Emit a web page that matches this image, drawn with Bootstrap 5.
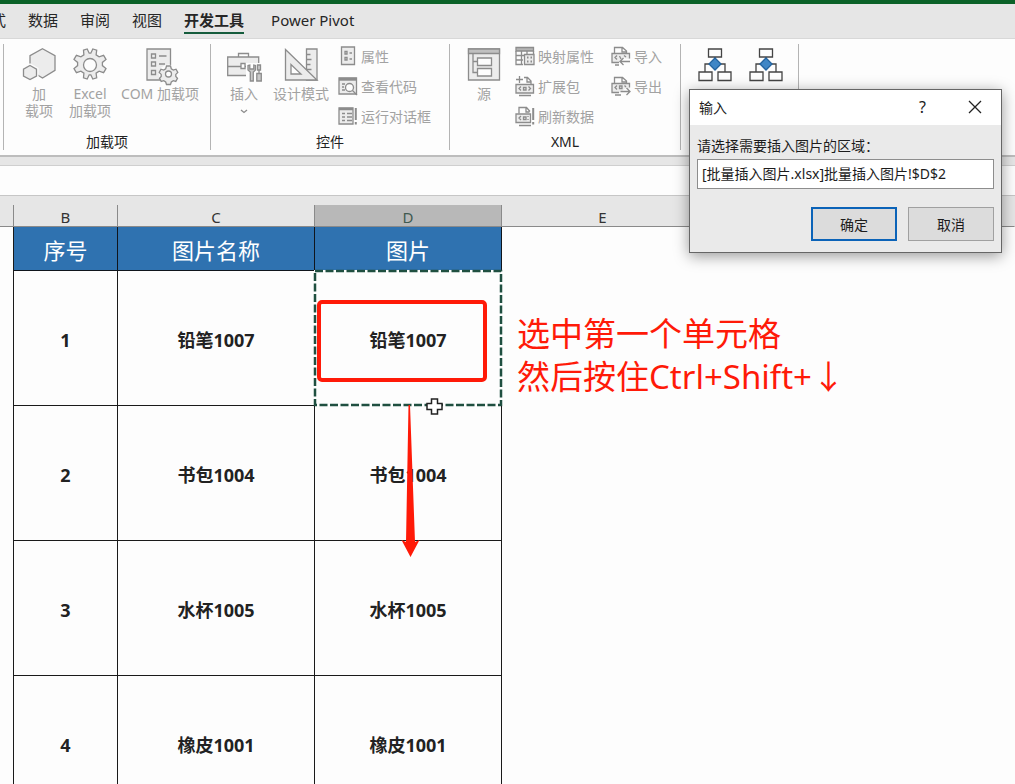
<!DOCTYPE html>
<html lang="zh-CN">
<head>
<meta charset="utf-8">
<meta name="viewport" content="width=device-width, initial-scale=1">
<title>批量插入图片.xlsx</title>
<link href="https://cdn.jsdelivr.net/npm/bootstrap@5.3.0/dist/css/bootstrap.min.css" rel="stylesheet">
<style>
body{font-family:"Noto Sans","Noto Sans CJK SC",sans-serif;font-size:14px;line-height:17px;color:#222;background:#fdfdfd}
svg{display:block;flex:none;overflow:visible}
button{color:inherit}
.app-top{height:4px;background:#0b6228}
.tab-strip{height:34px;background:#e6e6e6;font-size:15px;padding-top:5px}
.tab-strip a{color:#262626;text-decoration:none;line-height:22px;padding:0 0 1px;margin-right:22px;border-bottom:2px solid transparent}
.tab-strip a.clipped{margin-left:-9px}
.tab-strip a.current{font-weight:700;border-color:#155c3c;margin-right:27px}
.ribbon{height:119px;background:#fdfdfd;border-top:1px solid #d8d8d8;border-bottom:2px solid #bdbdbd;padding:5px 0 6px 3px}
.r-group{border-right:1px solid #b4b4b4;height:106px;flex:none}
.r-group:first-child{border-left:1px solid #b4b4b4}
.g-addins{width:208px}
.g-addins .r-body{padding-left:11px}
.g-controls{width:239px}
.g-controls .r-body{padding-left:9px}
.g-xml{width:231px}
.g-xml .r-body{padding-left:10px}
.g-extra{width:118px}
.g-extra .r-body{padding-left:8px}
.r-body{height:90px}
.r-cap{color:#222;text-align:center;line-height:16px}
.r-big{background:none;border:0;padding:4px 0 0;color:#a2a2a2;gap:3px}
.w-s{width:48px}.w-m{width:54px}.w-l{width:66px}.w-xl{width:86px}
.r-list{gap:6px}
.r-list.first{padding-left:4px}
.r-list.wide{padding-left:7px;width:103px}
.r-small{background:none;border:0;padding:0;height:24px;color:#a2a2a2;gap:3px;white-space:nowrap}
.ic{fill:none;stroke:#8c8c8c;stroke-width:1.3}
.gap-strip{height:9px;background:#e6e6e6;border-bottom:1px solid #cfcfcf}
.formula{height:30px;background:#fdfdfd;border:0;border-bottom:1px solid #c6c6c6}
.sheet{border-top:9px solid #e6e6e6}
.grid{table-layout:fixed;border-collapse:separate;border-spacing:0;width:100%}
.grid th,.grid td{padding:0;text-align:center;vertical-align:middle;position:relative}
.grid .col-heads th{height:22px;line-height:18px;padding-top:3px;background:#e6e6e6;border-right:1px solid #8a8a8a;border-bottom:1px solid #8a8a8a;font-weight:400;font-size:15px;color:#333}
.grid .col-heads th.picked{background:#b8b8b8;color:#3f5a50}
.grid .col-heads th.plain{border-right-color:#e6e6e6}
.grid .title-row .cellx{height:44px;background:#2f72b0;color:#fff;font-size:22px;line-height:30px;padding-top:2px;border-color:#10151c}
.cellx{border-right:1px solid #1a1a1a;border-bottom:1px solid #1a1a1a}
.grid .data-row td{height:135px;font-size:18px;line-height:26px;font-weight:700;padding-top:3px}
.grid td.edge{border-right:1px solid #1a1a1a}
.c-a{width:14px}.c-b{width:104px}.c-c{width:197px}.c-d{width:187px}.c-e{width:202px}
.over{position:absolute}
.ants{left:-1px;top:-1px}
.red-box{left:2px;top:29px;width:170px;height:82px;border:4px solid #ff1a08;border-radius:5px}
.arrow{left:86px;top:134px;z-index:2}
.cross{left:111px;top:127px;z-index:3}
.grid .note{left:15px;top:41px;font-size:33px;line-height:43px;font-weight:400;color:#ff1a08;white-space:nowrap;text-align:left}
.dlg{position:absolute;top:89px;right:13px;width:313px;background:#eaeaea;border:1px solid #666;box-shadow:0 3px 14px rgba(0,0,0,.4);z-index:5;color:#1c1c1c}
.dlg-head{height:35px;background:#fff;padding:0 19px 1px 9px}
.dlg-head button{background:none;border:0;padding:0}
.dlg-head .help{margin-right:42px;font-size:16px}
.dlg-main{padding:12px 7px 11px}
.dlg-main label{margin-bottom:5px}
.dlg-input{height:30px;border:1px solid #8d8d8d;background:#fff;padding:0 4px 3px;width:100%;color:#1c1c1c}
.dlg-actions{gap:11px;margin-top:18px}
.dlg-btn{width:86px;height:34px;border:1px solid #a0a0a0;background:#dcdcdc;padding:0}
.dlg-btn.main{border:2px solid #0b63b8}
</style>
</head>
<body class="vh-100 overflow-hidden d-flex flex-column position-relative">
<div class="app-top flex-shrink-0"></div>
<nav class="tab-strip flex-shrink-0 d-flex align-items-start">
<a href="#" class="clipped">式</a><a href="#">数据</a><a href="#">审阅</a><a href="#">视图</a><a href="#" class="current">开发工具</a><a href="#">Power Pivot</a>
</nav>
<div class="ribbon flex-shrink-0 d-flex">
 <section class="r-group g-addins">
  <div class="r-body d-flex align-items-start">
   <button class="r-big w-s d-flex flex-column align-items-center">
    <svg class="ic" width="34" height="34" viewBox="0 0 34 34"><path fill="#ececec" d="M20.500.7l12.500 7v14.600l-12.500 7.700-12.500-7.700V7.700z"/><path fill="#ececec" stroke="#fdfdfd" stroke-width="4" d="M8 17.500l6.500 3.700v6.800L8 31.500l-6.500-3.500v-6.800z"/><path fill="#ececec" d="M8 17.500l6.500 3.700v6.800L8 31.500l-6.500-3.500v-6.800z"/></svg><span>加<br>载项</span></button>
   <button class="r-big w-m d-flex flex-column align-items-center">
    <svg class="ic" width="34" height="34" viewBox="-17 -17 34 34"><path fill="#ececec" d="M-6.500-14.800L-2.800-16l2 4.200h1.600l2-4.200 3.900 1.200-.6 4.700 3 2 4.500-1.500 2.400 4-3.600 3v3.200l3.600 3-2.400 4-4.500-1.500-3 2 .6 4.700-3.900 1.200-2-4.200h-1.600l-2 4.200-3.700-1.200.4-4.700-3-2-4.500 1.500-2.400-4 3.600-3v-3.200l-3.600-3 2.400-4 4.500 1.500 3-2z"/><circle r="6.500" fill="#fdfdfd"/></svg><span>Excel<br>加载项</span></button>
   <button class="r-big w-xl d-flex flex-column align-items-center">
    <svg class="ic" width="34" height="34" viewBox="0 0 34 34"><path fill="#ececec" d="M4 1h23.500v31H4z"/><path d="M8.500 6h4v4h-4zM8.500 14h4v4h-4zM8.500 22.500h4v4h-4zM16 8h7.500M16 16h6"/><g transform="translate(25.500 26)"><circle r="9.500" fill="#fdfdfd" stroke="none"/><path fill="#ececec" d="M-2-8h4l.8 2.800 2 1.200 2.700-.8 1.800 3.200-2 2v2l1.700 2-1.700 3-2.500-.7-2 1.300-.8 2.500h-4l-.8-2.500-2-1.300-2.500.7-1.700-3 1.700-2v-2l-2-2 1.800-3.200 2.700.8 2-1.200z"/><circle r="3" fill="#fdfdfd"/></g></svg><span>COM 加载项</span></button>
  </div>
  <div class="r-cap">加载项</div>
 </section>
 <section class="r-group g-controls">
  <div class="r-body d-flex align-items-start">
   <button class="r-big w-s d-flex flex-column align-items-center">
    <svg class="ic" width="34" height="34" viewBox="0 0 34 34"><path fill="#ececec" d="M.700 9h31v18.500h-31z"/><path d="M.700 18.500h31M11.500 9V5.500h10V9"/><path fill="#fdfdfd" d="M14 15.500h4v5h-4z"/><path fill="#fdfdfd" stroke="none" d="M19 15h15v19H19z"/><path fill="#c9c9c9" d="M21 17.500v4.500l2.300 2V33h3V24l2.200-2v-4.500l-1.700-.5v4h-4v-4zM30.500 17h3v5h-3zM29.800 25.500h4.500V33h-4.500zM32 22v3.500"/></svg><span>插入</span><svg class="ic mt-1" width="8" height="5" viewBox="0 0 8 5"><path d="M1 1l3 2.500L7 1"/></svg></button>
   <button class="r-big w-l d-flex flex-column align-items-center">
    <svg class="ic" width="34" height="34" viewBox="0 0 34 34"><path fill="#ececec" d="M22.500 1H33v31H22.500zM22.500 6.500h4M22.500 11.500h5M22.500 16.500h4M22.500 21.500h5"/><path fill="#ececec" d="M1.500 1.500L33 32H1.500z"/><path fill="#fdfdfd" d="M7 16.500V26h10z"/></svg><span>设计模式</span></button>
   <div class="r-list first d-flex flex-column align-items-start">
    <button class="r-small d-flex align-items-center"><svg class="ic" width="20" height="20" viewBox="0 0 20 20"><path fill="#ececec" d="M3.500 1h13v17.500h-13z"/><path d="M7 5.500h2V8H7zM7 11.500h2V14H7zM11.500 7H14M11.500 13H14"/></svg>属性</button>
    <button class="r-small d-flex align-items-center"><svg class="ic" width="20" height="20" viewBox="0 0 20 20"><path fill="#ececec" d="M1 2h17.500v16H1z"/><path d="M1 3.200h17.500" stroke-width="3"/><path d="M4 8h3M4 11h2M4 14h3"/><circle cx="11.500" cy="11.500" r="4" fill="#fdfdfd"/><path d="M14.500 14.500L19 19"/></svg>查看代码</button>
    <button class="r-small d-flex align-items-center"><svg class="ic" width="20" height="20" viewBox="0 0 20 20"><path fill="#ececec" d="M15 18H1V2h14z"/><path d="M1 3h14" stroke-width="2.500"/><path d="M4 7.500h3M9 7.500h5M4 11h3M9 11h5M4 14.500h3M9 14.500h5"/><path d="M17.800 2v12M17.800 16v2.500" stroke-width="2"/></svg>运行对话框</button>
   </div>
  </div>
  <div class="r-cap">控件</div>
 </section>
 <section class="r-group g-xml">
  <div class="r-body d-flex align-items-start">
   <button class="r-big w-s d-flex flex-column align-items-center">
    <svg class="ic" width="34" height="34" viewBox="0 0 34 34"><path fill="#ececec" d="M1.500 1h31v31h-31z"/><path fill="#c0c0c0" d="M1.500 1h31v4.500h-31z"/><path d="M6 5.500V24.500h4.500M6 13.500h4.500"/><path fill="#fdfdfd" d="M10.500 10h14v7.500h-14zM10.500 20.500h14V28h-14z"/></svg><span>源</span></button>
   <div class="r-list wide d-flex flex-column align-items-start">
    <button class="r-small d-flex align-items-center"><svg class="ic" width="20" height="20" viewBox="0 0 20 20"><path fill="#b5b5b5" d="M1 1.500h17.500V5H1z"/><path d="M1 5v13.500h7M1 9.500h9M1 14h7M6.500 5v13.500M12 5v3M18.500 5v3"/><path fill="#ececec" d="M9.500 8.500h9.500v10H9.500z"/><path d="M12 11.500h1.500M15.500 11.500H17M12 15.500h1.500M15.500 15.500H17" stroke-width="2"/></svg>映射属性</button>
    <button class="r-small d-flex align-items-center"><svg class="ic" width="20" height="20" viewBox="0 0 20 20"><path d="M4.500 0v7M1 3.500h7M9 1.500h3.500L16 5v3.500M12 1.500V6h4M4 19.500h12"/><path fill="#ececec" d="M1 8.500h17.500v8.500H1z"/><path d="M6 10.500l-2 2 2 2M13.500 10.500l2 2-2 2M8.500 11.500h2.500v2.500H8.500z"/></svg>扩展包</button>
    <button class="r-small d-flex align-items-center"><svg class="ic" width="20" height="20" viewBox="0 0 20 20"><path d="M4 7.500V1.500h7.500L15 5.500M11 1.500V6h3.500M4 19.500h12"/><path fill="#ececec" d="M15.500 8H1v8.500h14.500z"/><path d="M6 10l-2 2 2 2M8.500 11H11v2.500H8.500zM13 10v1M13 13v1"/><path d="M18.200 2v12M18.200 16v2.500" stroke-width="2"/></svg>刷新数据</button>
   </div>
   <div class="r-list d-flex flex-column align-items-start">
    <button class="r-small d-flex align-items-center"><svg class="ic" width="20" height="20" viewBox="0 0 20 20"><path d="M3.500 7V1.500h8L15.500 5v2.500M11 1.500V6h4.500M4 19h4"/><path fill="#ececec" stroke="none" d="M1 7.500h17.500V13L12 12l-4 5H1z"/><path d="M8 16.500H1v-9h17.500v5M6 9.500l-2 2 2 2M8.500 10l1.500 3M13 9.500l2 1.500M19 15.500H9.500M12.500 12L9 15.500l3.500 3.500"/></svg>导入</button>
    <button class="r-small d-flex align-items-center"><svg class="ic" width="20" height="20" viewBox="0 0 20 20"><path d="M3.500 7V1.500h8L15.500 5v2.500M11 1.500V6h4.500M4 19h6"/><path fill="#ececec" stroke="none" d="M1 7.500h17.500V13L15 12l-6 4.500H1z"/><path d="M8 16.500H1v-9h17.500v4M6 9.500l-2 2 2 2M8.500 10H11v2.500H8.500zM13.500 9.500l1.500 1.500M9.500 15.500H19M15.500 12l3.500 3.500-3.500 3.500"/></svg>导出</button>
   </div>
  </div>
  <div class="r-cap">XML</div>
 </section>
 <section class="r-group g-extra">
  <div class="r-body d-flex align-items-start">
   <button class="r-big w-m d-flex flex-column align-items-center" style="width:51px" aria-label="流程一">
    <svg width="34" height="34" viewBox="0 0 34 34" fill="#fdfdfd" stroke="#444" stroke-width="1.300"><path fill="none" d="M17 9v8M7 24v-8h20v8"/><path d="M10.500 1h13v8h-13zM1 24h13v8.500H1zM20 24h13v8.500H20z"/><path fill="#3f86c6" stroke="#23639f" d="M17 10l6 6-6 6-6-6z"/></svg></button>
   <button class="r-big w-m d-flex flex-column align-items-center" style="width:51px" aria-label="流程二">
    <svg width="34" height="34" viewBox="0 0 34 34" fill="#fdfdfd" stroke="#444" stroke-width="1.300"><path fill="none" d="M17 9v8M7 24v-8h20v8"/><path d="M10.500 1h13v8h-13zM1 24h13v8.500H1zM20 24h13v8.500H20z"/><path fill="#3f86c6" stroke="#23639f" d="M17 10l6 6-6 6-6-6z"/></svg></button>
  </div>
 </section>
</div>
<div class="gap-strip flex-shrink-0"></div>
<input class="formula flex-shrink-0 w-100" aria-label="编辑栏">
<main class="sheet flex-grow-1 overflow-hidden">
<table class="grid">
<colgroup><col class="c-a"><col class="c-b"><col class="c-c"><col class="c-d"><col class="c-e"><col></colgroup>
<thead><tr class="col-heads"><th></th><th>B</th><th>C</th><th class="picked">D</th><th class="plain">E</th><th class="plain"></th></tr></thead>
<tbody>
<tr class="title-row"><td class="edge"></td><td class="cellx">序号</td><td class="cellx">图片名称</td><td class="cellx">图片</td><td></td><td></td></tr>
<tr class="data-row"><td class="edge"></td><td class="cellx">1</td><td class="cellx">铅笔1007</td><td class="cellx">铅笔1007
<svg class="over ants" width="188" height="136" viewBox="0 0 188 136"><path fill="none" stroke="#fdfdfd" stroke-width="2" d="M1 1h186v134H1z"/><path fill="none" stroke="#1f4f40" stroke-width="2.500" stroke-dasharray="8 2.500" d="M1 1h186v134H1z"/></svg>
<div class="over red-box"></div>
<svg class="over arrow" width="18" height="152" viewBox="0 0 18 152"><path fill="#ff1a08" d="M7.500 0h1.500l5 137 4.500-2L9.500 152 .5 135l4.500 2z"/></svg>
<svg class="over cross" width="17" height="17" viewBox="0 0 17 17"><path fill="#fff" stroke="#222" stroke-width="1.500" d="M5.500 1h6v4.500H16v6h-4.500V16h-6v-4.500H1v-6h4.500z"/></svg></td>
<td><div class="over note">选中第一个单元格<br>然后按住Ctrl+Shift+↓</div></td><td></td></tr>
<tr class="data-row"><td class="edge"></td><td class="cellx">2</td><td class="cellx">书包1004</td><td class="cellx">书包1004</td><td></td><td></td></tr>
<tr class="data-row"><td class="edge"></td><td class="cellx">3</td><td class="cellx">水杯1005</td><td class="cellx">水杯1005</td><td></td><td></td></tr>
<tr class="data-row"><td class="edge"></td><td class="cellx">4</td><td class="cellx">橡皮1001</td><td class="cellx">橡皮1001</td><td></td><td></td></tr>
</tbody>
</table>
</main>
<div class="dlg" role="dialog" aria-labelledby="dlgTitle">
 <div class="dlg-head d-flex align-items-center">
  <span id="dlgTitle" class="me-auto">输入</span>
  <button type="button" class="help">?</button>
  <button type="button" aria-label="关闭"><svg width="14" height="14" viewBox="0 0 14 14" fill="none" stroke="#222" stroke-width="1.300"><path d="M1 1l12 12M13 1L1 13"/></svg></button>
 </div>
 <div class="dlg-main">
  <label for="area" class="d-block">请选择需要插入图片的区域：</label>
  <input id="area" class="dlg-input" value="[批量插入图片.xlsx]批量插入图片!$D$2">
  <div class="dlg-actions d-flex justify-content-end"><button type="button" class="dlg-btn main">确定</button><button type="button" class="dlg-btn">取消</button></div>
 </div>
</div>
<script src="https://cdn.jsdelivr.net/npm/bootstrap@5.3.0/dist/js/bootstrap.bundle.min.js"></script>
</body>
</html>
